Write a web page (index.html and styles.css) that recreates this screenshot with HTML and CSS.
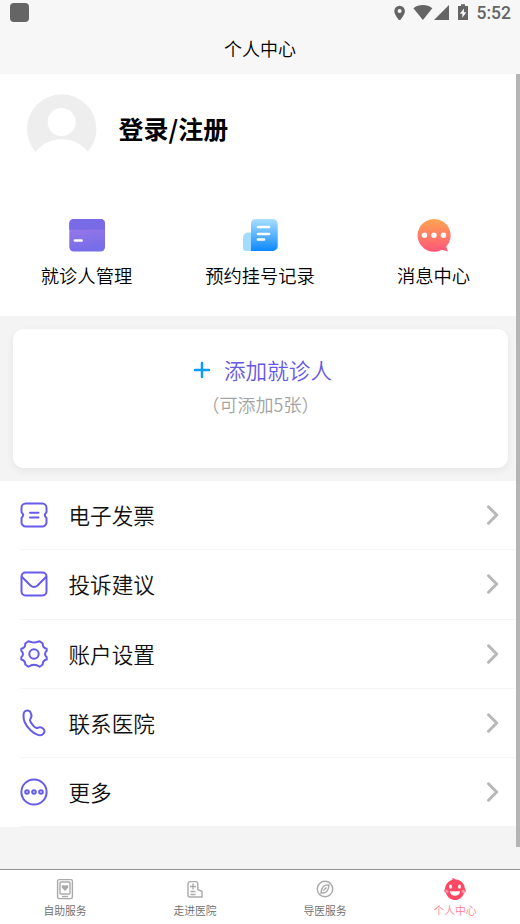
FILE: index.html
```html
<!DOCTYPE html>
<html lang="zh-CN">
<head>
<meta charset="utf-8">
<title>个人中心</title>
<link rel="stylesheet" href="styles.css">
</head>
<body>
<header class="top">
  <div class="status">
    <i class="status-app"></i>
    <svg class="status-icons" width="82" height="20" viewBox="0 0 82 20" fill="#656565">
      <path fill-rule="evenodd" d="M7.600 5.700a5.300 5.300 0 0 0-5.300 5.300c0 3.900 5.300 9.800 5.300 9.800s5.300-5.900 5.300-9.800a5.300 5.300 0 0 0-5.300-5.300zm0 3.300a2 2 0 1 1 0 4 2 2 0 0 1 0-4z"/>
      <path d="M21.400 8.200C26.500 4 35.200 4 40.300 8.200L30.900 20z"/>
      <path d="M57 5v15H42z"/>
      <path fill-rule="evenodd" d="M69 4.300h4v1.700h3v14H66V6h3zM72 8.500l-4.200 5.300h2.500v4l4.100-5.500h-2.500z"/>
    </svg>
    <span class="clock">5:52</span>
  </div>
  <h1 class="title">个人中心</h1>
</header>

<main class="page">
  <section class="profile">
    <div class="user">
      <svg width="70" height="70" viewBox="0 0 70 70">
        <circle cx="34.700" cy="35" r="34.700" fill="#eee"/>
        <circle cx="34.700" cy="28" r="14" fill="#fff"/>
        <path d="M8.500 58C21 41 49 41 61 58L61 70H9z" fill="#fff"/>
      </svg>
      <span class="login">登录/注册</span>
    </div>
    <nav class="shortcuts">
      <a class="shortcut">
        <svg width="38" height="36" viewBox="0 0 38 36">
          <defs><linearGradient id="card" x1="0" y1="0" x2=".2" y2="1"><stop offset=".25" stop-color="#9a78e9"/><stop offset="1" stop-color="#766de8"/></linearGradient></defs>
          <rect x="1.300" y="2" width="35.700" height="32.500" rx="4.500" fill="url(#card)"/>
          <path d="M1.300 12.800V6.500A4.500 4.500 0 0 1 5.800 2h26.700A4.500 4.500 0 0 1 37 6.500v6.300z" fill="#786be5"/>
          <path d="M7 23.500h6.500" stroke="#fff" stroke-width="2.700" stroke-linecap="round"/>
        </svg>
        <span>就诊人管理</span>
      </a>
      <a class="shortcut">
        <svg width="38" height="36" viewBox="0 0 38 36">
          <defs><linearGradient id="doc" x1="0" y1="0" x2="0" y2="1"><stop stop-color="#a9dfff"/><stop offset="1" stop-color="#0b88ff"/></linearGradient></defs>
          <path d="M10 15.500H7a5 5 0 0 0-5 5V31a3 3 0 0 0 3 3h5z" fill="#a4dcff"/>
          <path d="M10 34V6.500A4.500 4.500 0 0 1 14.500 2H32a4.700 4.700 0 0 1 4.700 4.700v22.600A4.700 4.700 0 0 1 32 34z" fill="url(#doc)"/>
          <path d="M17 10h11M17 17h11M17 22.500h6" stroke="#fff" stroke-width="2.700" stroke-linecap="round"/>
        </svg>
        <span>预约挂号记录</span>
      </a>
      <a class="shortcut">
        <svg width="38" height="36" viewBox="0 0 38 36">
          <defs><linearGradient id="chat" x1="0" y1="0" x2="0" y2="1"><stop stop-color="#ffa550"/><stop offset="1" stop-color="#ff567a"/></linearGradient></defs>
          <path d="M19 2a16.400 16.400 0 1 0 8 30.700l5.900 1.700-1.700-4.800A16.400 16.400 0 0 0 19 2z" fill="url(#chat)"/>
          <g fill="#fff"><circle cx="9.500" cy="18.300" r="2.700"/><circle cx="19" cy="18.300" r="2.700"/><circle cx="28.500" cy="18.300" r="2.700"/></g>
        </svg>
        <span>消息中心</span>
      </a>
    </nav>
  </section>

  <section class="add-card">
    <div class="add">
      <svg width="18" height="18" viewBox="0 0 18 18"><path d="M9 2v14M2 9h14" stroke="#0b9df8" stroke-width="2.500" stroke-linecap="round"/></svg>
      <span>添加就诊人</span>
    </div>
    <div class="hint">（可添加5张）</div>
  </section>

  <ul class="menu">
    <li class="row">
      <svg class="icon" viewBox="0 0 28 28"><path d="M5.700 2.500h16.600a4.200 4.200 0 0 1 4.200 4.200v4.100q0 1-.7 1.300-2 2 0 4 .7.300.7 1.300v3.900a4.200 4.200 0 0 1-4.200 4.200H5.700a4.200 4.200 0 0 1-4.200-4.200v-3.900q0-1 .7-1.300 2-2 0-4-.7-.3-.7-1.300V6.700a4.200 4.200 0 0 1 4.200-4.200zM10 11.700h8.500M10 16.500h8.500"/></svg>
      <span class="name">电子发票</span>
      <svg class="chevron" viewBox="0 0 14 22"><path d="M2.500 2.800 10.700 11 2.500 19.200"/></svg>
    </li>
    <li class="row">
      <svg class="icon" viewBox="0 0 28 28"><rect x="1.500" y="2.500" width="25" height="23" rx="4"/><path d="M2 7l8.500 8.500q3.500 3 7 0L26 7"/></svg>
      <span class="name">投诉建议</span>
      <svg class="chevron" viewBox="0 0 14 22"><path d="M2.500 2.800 10.700 11 2.500 19.200"/></svg>
    </li>
    <li class="row">
      <svg class="icon" viewBox="0 0 28 28"><path d="M8.300 1.300L11 1.900Q14 3.300 17 1.900L19.700 1.300L22.700 3.500Q22.600 8 26.700 8.800V10.800Q23.300 14 26.700 17.200V19.500Q22.600 20.500 22.700 24.500L19.700 26.700Q14 22.600 8.300 26.700L5.300 24.500Q5.400 20.500 1.300 19.500V17.200Q4.700 14 1.300 10.800V8.800Q5.400 8 5.300 3.500z"/><circle cx="14" cy="14" r="4.700"/></svg>
      <span class="name">账户设置</span>
      <svg class="chevron" viewBox="0 0 14 22"><path d="M2.500 2.800 10.700 11 2.500 19.200"/></svg>
    </li>
    <li class="row">
      <svg class="icon" viewBox="0 0 28 28"><path d="M4.200 3.200C6 .7 9.700 1 10.800 3.800c1.500 3.200.7 4.700-.5 6.200-1.500 2 4.400 9.600 7 9 2-1 4-1.100 6 .7 2.200 1.900 1.200 4.500-.8 5.800C17.500 29.200 2.600 17.500 3.500 6q.1-1.700.7-2.800z"/></svg>
      <span class="name">联系医院</span>
      <svg class="chevron" viewBox="0 0 14 22"><path d="M2.500 2.800 10.700 11 2.500 19.200"/></svg>
    </li>
    <li class="row">
      <svg class="icon" viewBox="0 0 28 28"><circle cx="14" cy="14" r="12.600"/><circle cx="7" cy="14" r="1.800"/><circle cx="14" cy="14" r="1.800"/><circle cx="21" cy="14" r="1.800"/></svg>
      <span class="name">更多</span>
      <svg class="chevron" viewBox="0 0 14 22"><path d="M2.500 2.800 10.700 11 2.500 19.200"/></svg>
    </li>
  </ul>
</main>

<nav class="tabs">
  <a class="tab">
    <svg viewBox="0 0 24 24"><rect x="4.600" y="2.600" width="14.800" height="19" rx="1.500"/><rect x="7" y="5" width="10" height="12" rx="1"/><path d="M9 19.500h6"/><path d="M12 13 9.500 10.500V9h1.700l.8.700.8-.7h1.700v1.500z" fill="#aaa"/></svg>
    <span>自助服务</span>
  </a>
  <a class="tab">
    <svg viewBox="0 0 24 24"><path d="M14.800 12.500V6.800a2.200 2.200 0 0 0-2.200-2.200H7.200A2.200 2.200 0 0 0 5 6.800V18a2 2 0 0 0 2 2h12v-5.500l-4.200-2zM10 6.500v6M7 9.500h6M7.500 14.500h5M7.500 17.500h5"/></svg>
    <span>走进医院</span>
  </a>
  <a class="tab">
    <svg viewBox="0 0 24 24"><circle cx="12" cy="12" r="7.700"/><path d="M16 8c-5-.5-7.500 2-8 8 5 .5 7.500-2 8-8z"/><path d="M13.500 10.500l-3 3"/></svg>
    <span>导医服务</span>
  </a>
  <a class="tab active">
    <svg viewBox="0 0 24 24"><g stroke="none" fill="#ff4964"><path d="M9 1.300q2-.3 3 1a10 10 0 0 1 10 9.700c1.500 1.500.6 3.300-.9 3.700C19.500 20.500 16 23 12 23s-7.500-2.500-9.100-7.300C1.400 15.300.5 13.500 2 12 2.200 7.500 5.200 4 9.700 2.700z"/><g fill="#ff91a0"><circle cx="3.800" cy="14.500" r="1.800"/><circle cx="20.200" cy="14.500" r="1.800"/></g><g fill="#fff"><ellipse cx="7.500" cy="9.700" rx="1.400" ry="2.100"/><ellipse cx="16.500" cy="9.700" rx="1.400" ry="2.100"/><path d="M7 14.300h10c0 6-10 6-10 0z"/></g></g></svg>
    <span>个人中心</span>
  </a>
</nav>
<i class="scrollbar"></i>
</body>
</html>
```
FILE: styles.css
```css
* { box-sizing: border-box; }
body {
  margin: 0;
  height: 924px;
  display: flex;
  flex-direction: column;
  overflow: hidden;
  background: #f4f4f4;
  color: #000;
  font-family: "Noto Sans CJK SC", sans-serif;
  font-weight: 350;
}
.top { height: 74px; flex: none; background: #f7f7f7; }
.status {
  height: 26px;
  display: flex;
  align-items: flex-start;
  padding: 0 9px 0 10px;
}
.status-app { width: 19px; height: 19px; margin-top: 3px; border-radius: 4px; background: #656565; }
.status-icons { margin-left: auto; }
.clock {
  width: 36px;
  margin-left: 1px;
  font: 500 17.500px/27px Roboto, sans-serif;
  text-align: right;
  color: #656565;
}
.title { margin: 9px 0 0; text-align: center; font-size: 18px; line-height: 27px; font-weight: 350; }
.page { flex: 1; min-height: 0; }
.profile { height: 242px; padding-top: 20px; background: #fff; }
.user { display: flex; align-items: center; padding-left: 27px; gap: 21.500px; }
.login { margin-bottom: 2px; font-size: 25px; line-height: 36px; font-weight: 700; }
.shortcuts { display: grid; grid-template-columns: 173px 174px 173px; margin-top: 53px; }
.shortcut { display: flex; flex-direction: column; align-items: center; font-size: 18.300px; line-height: 28px; }
.shortcut span { margin-top: 8px; }
.add-card {
  height: 139px;
  margin: 13px 12px 13px 13px;
  padding-top: 25px;
  border-radius: 11px;
  background: #fff;
  box-shadow: 0 3px 8px rgba(0, 0, 0, .06);
  text-align: center;
}
.add { display: flex; align-items: center; justify-content: center; gap: 13px; padding-left: 4px; font-size: 21.600px; line-height: 32px; color: #6558e5; }
.hint { font-size: 18px; line-height: 27px; margin-top: 5px; color: #a3a3a3; }
.menu { margin: 0; padding: 0; list-style: none; background: #fff; }
.row { height: 69.250px; display: flex; align-items: center; margin-left: 20px; padding-right: 20.500px; border-bottom: 1px solid #f5f5f5; }
.icon { width: 28px; height: 28px; fill: none; stroke: #665bea; stroke-width: 2; stroke-linejoin: round; stroke-linecap: round; }
.name { margin-left: 20.500px; font-size: 21.600px; line-height: 32px; color: #111; }
.chevron { width: 14px; height: 22px; margin-left: auto; fill: none; stroke: #b8b8b8; stroke-width: 3; stroke-linecap: round; stroke-linejoin: round; }
.tabs { height: 55px; flex: none; display: grid; grid-template-columns: repeat(4, 1fr); border-top: 1px solid #929292; background: #fff; }
.tab { display: flex; flex-direction: column; align-items: center; padding-top: 6.500px; font-size: 10.800px; line-height: 16px; color: #6c6c6c; }
.tab svg { width: 24px; height: 24px; fill: none; stroke: #aaa; stroke-width: 1.400; }
.tab span { margin-top: 1px; }
.tab.active { color: #ff7c92; }
.scrollbar { position: absolute; right: 0; top: 74px; width: 4px; height: 773px; background: #b5b5b5; }
```
